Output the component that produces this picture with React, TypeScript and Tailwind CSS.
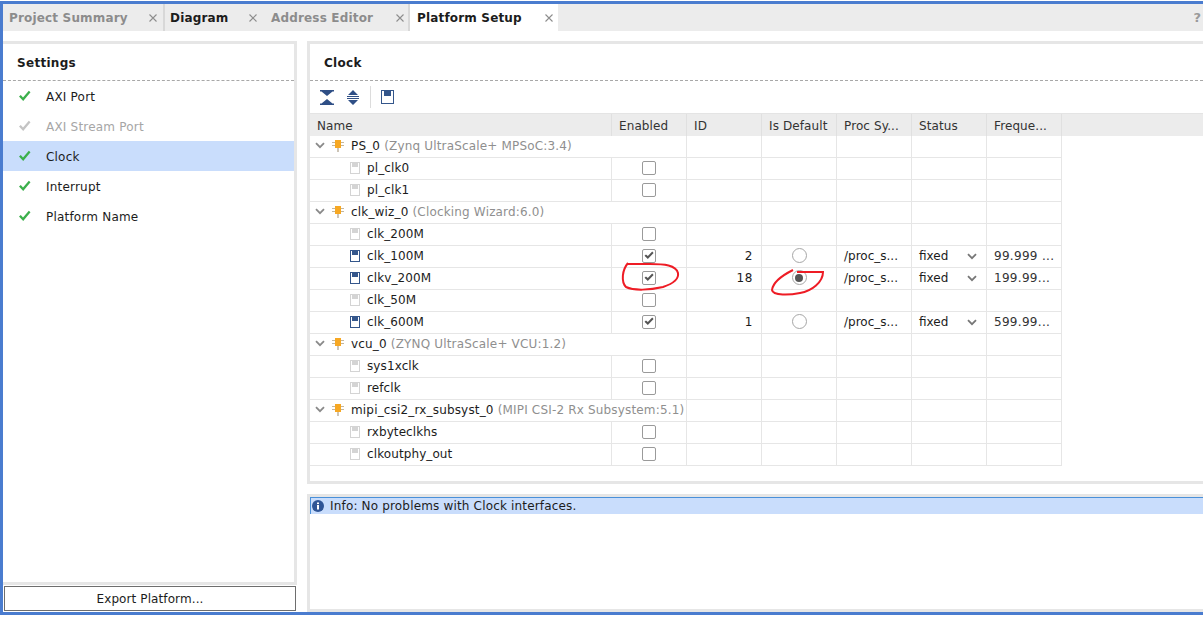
const SETTINGS = [
  { label: 'AXI Port' },
  { label: 'AXI Stream Port', disabled: true },
  { label: 'Clock', selected: true },
  { label: 'Interrupt' },
  { label: 'Platform Name' },
];

type Row =
  | { kind: 'group'; name: string; info: string }
  | { kind: 'port'; name: string; enabled?: boolean; id?: string; isDefault?: boolean; freq?: string };

const ROWS: Row[] = [
  { kind: 'group', name: 'PS_0', info: '(Zynq UltraScale+ MPSoC:3.4)' },
  { kind: 'port', name: 'pl_clk0' },
  { kind: 'port', name: 'pl_clk1' },
  { kind: 'group', name: 'clk_wiz_0', info: '(Clocking Wizard:6.0)' },
  { kind: 'port', name: 'clk_200M' },
  { kind: 'port', name: 'clk_100M', enabled: true, id: '2', isDefault: false, freq: '99.999 ...' },
  { kind: 'port', name: 'clkv_200M', enabled: true, id: '18', isDefault: true, freq: '199.99...' },
  { kind: 'port', name: 'clk_50M' },
  { kind: 'port', name: 'clk_600M', enabled: true, id: '1', isDefault: false, freq: '599.99...' },
  { kind: 'group', name: 'vcu_0', info: '(ZYNQ UltraScale+ VCU:1.2)' },
  { kind: 'port', name: 'sys1xclk' },
  { kind: 'port', name: 'refclk' },
  { kind: 'group', name: 'mipi_csi2_rx_subsyst_0', info: '(MIPI CSI-2 Rx Subsystem:5.1)' },
  { kind: 'port', name: 'rxbyteclkhs' },
  { kind: 'port', name: 'clkoutphy_out' },
];

const COLUMNS = ['Enabled', 'ID', 'Is Default', 'Proc Sy...', 'Status', 'Freque...'];

function CloseMark() {
  return (
    <svg width="8" height="8" viewBox="0 0 8 8" className="shrink-0 text-[#8d8d8d]">
      <path d="M0.5 0.5L7.5 7.5M7.5 0.5L0.5 7.5" stroke="currentColor" strokeWidth="1.1" />
    </svg>
  );
}

function Tab({ label, box, active, dim }: { label: string; box: string; active?: boolean; dim?: boolean }) {
  return (
    <div className={`flex h-full items-center justify-between ${box} ${active ? 'bg-white' : ''}`}>
      <span className={`text-[12px] font-bold tracking-[0.17px] whitespace-nowrap ${dim ? 'text-[#8c8c8c]' : 'text-[#1c1c1c]'}`}>
        {label}
      </span>
      <CloseMark />
    </div>
  );
}

function DocIcon({ active }: { active?: boolean }) {
  const color = active ? '#34568b' : '#d4d4d4';
  return (
    <svg width="10" height="12" viewBox="0 0 10 12" className="shrink-0">
      <rect x="0.5" y="0.5" width="9" height="11" fill="white" stroke={color} />
      <rect x="2" y="0" width="6" height="5" fill={color} />
    </svg>
  );
}

function CoreIcon() {
  return (
    <svg width="12" height="13" viewBox="0 0 12 13" className="shrink-0">
      <path d="M0 3.5H3M0 6.5H3M9 3.5H12M9 6.5H12" stroke="#c4b69c" strokeWidth="1" />
      <rect x="3" y="1" width="6" height="8" fill="#f7a823" />
      <path d="M6 9V13" stroke="#b8ac98" strokeWidth="1.4" />
    </svg>
  );
}

function TickMark({ color }: { color: string }) {
  return (
    <svg width="13" height="12" viewBox="0 0 13 12" className="shrink-0">
      <path d="M1 6.5L2.8 5L5 7.4L10.8 0.8L12.5 2.2L5.2 11Z" fill={color} />
    </svg>
  );
}

function CheckBox({ checked }: { checked?: boolean }) {
  return (
    <div className="flex h-[14px] w-[14px] items-center justify-center rounded-[2px] border border-[#9a9a9a] bg-white">
      {checked && (
        <svg width="10" height="9" viewBox="0 0 10 9">
          <path d="M0.5 4.8L2 3.4L3.8 5.1L8.2 0.6L9.6 2L3.8 8Z" fill="#555555" />
        </svg>
      )}
    </div>
  );
}

function Radio({ on }: { on?: boolean }) {
  return (
    <div className="flex h-[15px] w-[15px] items-center justify-center rounded-full border border-[#a6a6a6] bg-white">
      {on && <div className="h-[8px] w-[8px] rounded-full bg-[#555555]" />}
    </div>
  );
}

function Chevron({ className }: { className: string }) {
  return (
    <svg width="10" height="7" viewBox="0 0 10 7" className={`shrink-0 ${className}`} fill="none">
      <path d="M1 1.2L5 5.2L9 1.2" stroke="currentColor" strokeWidth="1.8" />
    </svg>
  );
}

function PortRow({ row }: { row: Row }) {
  if (row.kind === 'group') {
    return (
      <div className="grid h-[22px] grid-cols-[302px_75px_75px_75px_75px_75px_75px] border-b border-[#e6e6e6] text-[12px]">
        <div className="flex items-center pb-[2px] whitespace-nowrap">
          <Chevron className="ml-[5px] text-[#8a8a8a]" />
          <div className="ml-[7px] shrink-0">
            <CoreIcon />
          </div>
          <span className="ml-[7px] tracking-[0.17px] text-[#1c1c1c]">{row.name}</span>
          <span className="ml-[4px] tracking-[0.17px] text-[#8f8f8f]">{row.info}</span>
        </div>
        {COLUMNS.map((c) => (
          <div key={c} className="border-r border-[#e6e6e6]" />
        ))}
      </div>
    );
  }
  const wired = row.enabled;
  return (
    <div className="grid h-[22px] grid-cols-[302px_75px_75px_75px_75px_75px_75px] border-b border-[#e6e6e6] text-[12px] text-[#1c1c1c]">
      <div className="flex items-center border-r border-[#e6e6e6] pb-[2px] pl-[40px]">
        <DocIcon active={wired} />
        <span className="ml-[7px] tracking-[0.1px]">{row.name}</span>
      </div>
      <div className="flex items-center justify-center border-r border-[#e6e6e6] pb-[2px]">
        <CheckBox checked={row.enabled} />
      </div>
      <div className="flex items-center justify-end border-r border-[#e6e6e6] pb-[2px] pr-[8px] tracking-[0.6px]">{row.id}</div>
      <div className="flex items-center justify-center border-r border-[#e6e6e6] pb-[2px]">
        {wired && <Radio on={row.isDefault} />}
      </div>
      <div className="flex items-center border-r border-[#e6e6e6] pb-[2px] pl-[7px]">{wired && '/proc_s...'}</div>
      <div className="flex items-center justify-between border-r border-[#e6e6e6] pl-[7px] pr-[9px]">
        {wired && (
          <>
            <span className="-mt-[2px]">fixed</span>
            <Chevron className="text-[#777777]" />
          </>
        )}
      </div>
      <div className="flex items-center border-r border-[#e6e6e6] pb-[2px] pl-[7px] tracking-[0.3px] whitespace-nowrap text-[#333333]">
        {row.freq}
      </div>
    </div>
  );
}

function ToolbarIcons() {
  return (
    <div className="flex h-[32px] items-center pl-[10px]">
      <svg width="14" height="15" viewBox="0 0 14 15" className="shrink-0">
        <path d="M0 0H14V1.5H12.5L7 6L1.5 1.5H0ZM7 9L12.5 13.5H14V15H0V13.5H1.5Z" fill="#2f4f86" />
      </svg>
      <svg width="12" height="15" viewBox="0 0 12 15" className="ml-[13px] shrink-0">
        <path d="M6 0L11 5H1ZM6 15L11 10H1Z" fill="#2f4f86" />
        <path d="M0 6.5H12M0 8.5H12" stroke="#2f4f86" strokeWidth="1" />
      </svg>
      <div className="ml-[11px] h-[22px] w-px bg-[#dcdcdc]" />
      <svg width="13" height="14" viewBox="0 0 13 14" className="ml-[10px] shrink-0">
        <rect x="0.5" y="0.5" width="12" height="13" fill="white" stroke="#34568b" />
        <rect x="3" y="0" width="7" height="6" fill="#34568b" />
      </svg>
    </div>
  );
}

export default function App() {
  return (
    <div className="relative h-[623px] w-[1203px] overflow-hidden bg-white pt-px font-['DejaVu_Sans',sans-serif]">
      <div className="flex h-[614px] flex-col border-y-[3px] border-l-[3px] border-[#4a7ccf]">
        <div className="flex h-[27px] shrink-0 items-center bg-[#ececec]">
          <Tab label="Project Summary" box="w-[160px] pl-[6px] pr-[6px]" dim />
          <div className="h-full w-[2px] bg-[#d8d8d8]" />
          <Tab label="Diagram" box="w-[100px] pl-[5px] pr-[8px]" />
          <Tab label="Address Editor" box="w-[143px] pl-[6px] pr-[4px]" dim />
          <div className="h-full w-[2px] bg-[#d8d8d8]" />
          <Tab label="Platform Setup" box="w-[148px] pl-[7px] pr-[5px]" active />
          <span className="ml-auto pr-[2px] text-[13px] font-bold text-[#9a9a9a]">?</span>
        </div>

        <div className="mt-[10px] flex min-h-0 flex-1">
          <div className="flex w-[294px] shrink-0 flex-col">
            <div className="h-[544px] border-y-[3px] border-r-[3px] border-[#e6e6e6]">
              <div className="flex h-[37px] items-center border-b border-dashed border-[#a8a8a8] pl-[14px] pt-[2px] text-[12px] font-bold tracking-[0.3px] text-[#1c1c1c]">
                Settings
              </div>
              {SETTINGS.map((s) => (
                <div key={s.label} className={`flex h-[30px] items-center pl-[15px] text-[12px] ${s.selected ? 'bg-[#c9ddfc]' : ''}`}>
                  <TickMark color={s.disabled ? '#c4c4c4' : '#3cb04c'} />
                  <span className={`ml-[15px] pt-[2px] tracking-[0.2px] ${s.disabled ? 'text-[#a6a6a6]' : 'text-[#1c1c1c]'}`}>{s.label}</span>
                </div>
              ))}
            </div>
            <button className="ml-px mt-px h-[25px] w-[292px] border border-[#6e6e6e] bg-white text-[12px] tracking-[0.1px] text-[#1c1c1c]">
              Export Platform...
            </button>
          </div>

          <div className="ml-[10px] flex min-w-0 flex-1 flex-col">
            <div className="h-[443px] border-y-[3px] border-l-[3px] border-[#e6e6e6]">
              <div className="flex h-[37px] items-center border-b border-dashed border-[#a8a8a8] pl-[14px] pt-[2px] text-[12px] font-bold tracking-[0.3px] text-[#1c1c1c]">
                Clock
              </div>
              <ToolbarIcons />
              <div className="h-[23px] border-t border-[#e4e4e4] bg-[#ececec]">
                <div className="grid h-full w-[752px] grid-cols-[302px_75px_75px_75px_75px_75px_75px] text-[12px] tracking-[0.1px] text-[#333333]">
                  <div className="flex items-center border-r border-[#e0e0e0] pl-[7px] pt-[2px]">Name</div>
                  {COLUMNS.map((c) => (
                    <div key={c} className="flex items-center border-r border-[#e0e0e0] pl-[7px] pt-[2px] whitespace-nowrap">
                      {c}
                    </div>
                  ))}
                </div>
              </div>
              <div className="w-[752px]">
                {ROWS.map((r) => (
                  <PortRow key={r.name} row={r} />
                ))}
              </div>
            </div>
            <div className="mt-[10px] flex-1 border-y-[3px] border-l-[3px] border-[#e6e6e6]">
              <div className="flex h-[17px] items-center border-l border-t border-[#4a90d9] bg-[#c9ddfc] pl-px text-[12px] tracking-[0.17px] text-[#1c1c1c]">
                <svg width="12" height="12" viewBox="0 0 12 12" className="shrink-0">
                  <circle cx="6" cy="6" r="6" fill="#2f5596" />
                  <rect x="5" y="5" width="2" height="4.5" fill="white" />
                  <rect x="5" y="2.5" width="2" height="1.6" fill="white" />
                </svg>
                <span className="ml-[6px]">Info: No problems with Clock interfaces.</span>
              </div>
            </div>
          </div>
        </div>
      </div>

      {/* red pen marks drawn on top of the screenshot */}
      <svg width="1203" height="623" className="pointer-events-none absolute left-0 top-0" fill="none">
        <path
          d="M628 263C622 270 621 282 626 287C634 291 650 290 663 287C672 284 679 279 678 273C676 265 664 264 650 264C642 264 634 264 628 264"
          stroke="#ee1c25"
          strokeWidth="2"
        />
        <path
          d="M793 270C783 275 773 282 772 290C773 296 790 295 800 293C812 291 823 282 823 272C815 272 804 272 797 272"
          stroke="#ee1c25"
          strokeWidth="2"
        />
      </svg>
    </div>
  );
}
